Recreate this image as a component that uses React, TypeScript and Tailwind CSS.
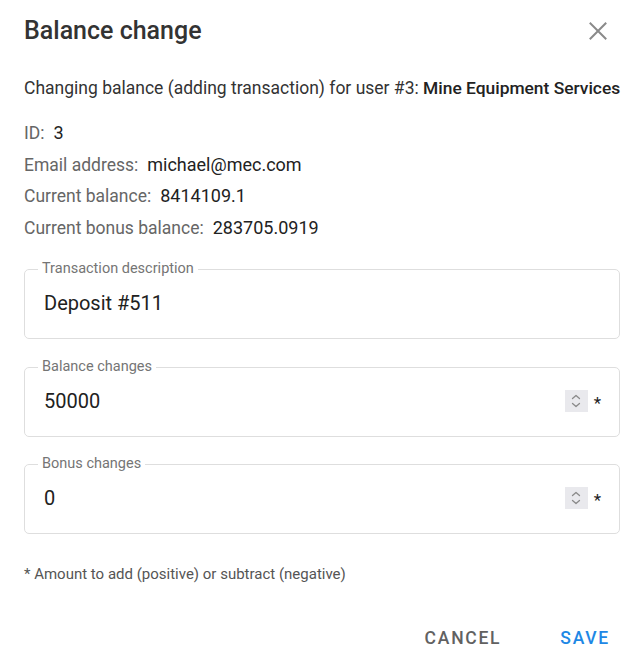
import React from "react";

function Spinner() {
  return (
    <div className="w-[23px] h-[22px] bg-[#e9e9ed] flex items-center justify-center">
      <svg width="12" height="16" viewBox="0 0 12 16" fill="none" stroke="#8a8a8a" strokeWidth="1.3" strokeLinecap="round" strokeLinejoin="round">
        <path d="M2.5 5.5 L6 2.5 L9.5 5.5" />
        <path d="M2.5 10.5 L6 13.5 L9.5 10.5" />
      </svg>
    </div>
  );
}

function Field({ label, value, number, className }: { label: string; value: string; number?: boolean; className?: string }) {
  return (
    <fieldset className={"border border-[#dedede] rounded-[5px] pl-[19px] pr-[19px] pt-[13px] pb-[23px] " + (className ?? "")}>
      <legend className="ml-[-6px] px-[4px] text-[14.5px] leading-[18px] text-[#757575]">{label}</legend>
      <div className="flex items-center h-[24px]">
        <div className="flex-1 text-[20px] leading-[24px] text-[#212121]">{value}</div>
        {number && (
          <div className="flex items-center gap-[6px] -mr-[1px]">
            <Spinner />
            <span className="text-[17px] text-[#222] leading-[16px] mt-[4px]">*</span>
          </div>
        )}
      </div>
    </fieldset>
  );
}

function Row({ label, value }: { label: string; value: string }) {
  return (
    <div className="h-[31.5px] flex items-baseline whitespace-nowrap">
      <span className="text-[17.5px] leading-[31.5px] text-[#666]">{label}</span>
      <span className="text-[18px] leading-[31.5px] text-[#222] ml-[9px]">{value}</span>
    </div>
  );
}

export default function App() {
  return (
    <div className="w-[644px] h-[670px] bg-white px-6 text-[16px]" style={{ fontFamily: "Roboto, 'Noto Sans', sans-serif" }}>
      <div className="flex justify-between items-center pt-[15px]">
        <h1 className="text-[25px] leading-[32px] font-medium text-[#333]">Balance change</h1>
        <svg width="18" height="18" viewBox="0 0 18 18" className="mr-[13px]" stroke="#8a8a8a" strokeWidth="2" strokeLinecap="square">
          <path d="M1.5 1.5 L16.5 16.5 M16.5 1.5 L1.5 16.5" />
        </svg>
      </div>
      <p className="mt-[29px] text-[17.5px] leading-[24px] text-[#333] whitespace-nowrap">
        Changing balance (adding transaction) for user #3: <span className="text-[17.4px] font-medium text-[#222]">Mine Equipment Services</span>
      </p>
      <div className="mt-[17px]">
        <Row label="ID:" value="3" />
        <Row label="Email address:" value="michael@mec.com" />
        <Row label="Current balance:" value="8414109.1" />
        <Row label="Current bonus balance:" value="283705.0919" />
      </div>
      <Field className="mt-[17px]" label="Transaction description" value="Deposit #511" />
      <Field className="mt-[19px]" label="Balance changes" value="50000" number />
      <Field className="mt-[18px]" label="Bonus changes" value="0" number />
      <p className="mt-[30px] text-[15px] leading-[20px] text-[#555]">* Amount to add (positive) or subtract (negative)</p>
      <div className="flex justify-end mt-[44px] gap-[59px] pr-[10px]">
        <button className="text-[17.5px] leading-[20px] font-medium tracking-[0.1em] text-[#616161]">CANCEL</button>
        <button className="text-[17.5px] leading-[20px] font-medium tracking-[0.1em] text-[#1e88e5]">SAVE</button>
      </div>
    </div>
  );
}
